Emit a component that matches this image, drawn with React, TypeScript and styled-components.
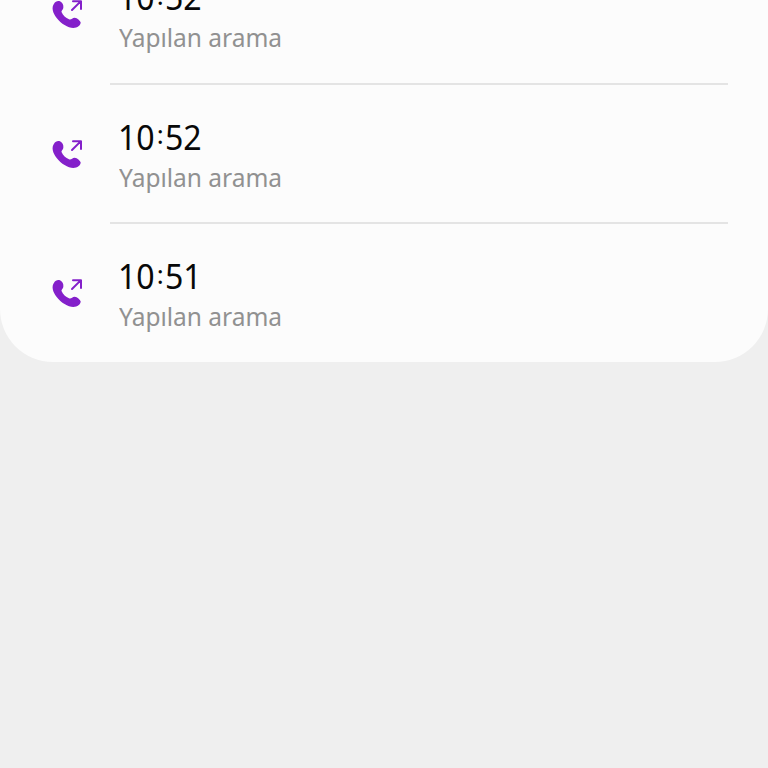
import React from "react";
import styled, { createGlobalStyle } from "styled-components";

const GlobalStyle = createGlobalStyle`
  body { margin: 0; background: #efefef; }
`;

const Screen = styled.main`
  height: 768px;
  overflow: hidden;
  background: #efefef;
  font-family: "Noto Sans", sans-serif;
`;

const CallList = styled.section`
  display: flex;
  flex-direction: column;
  justify-content: flex-end;
  box-sizing: border-box;
  height: 361.5px;
  overflow: hidden;
  background: #fcfcfc;
  border-radius: 0 0 53px 53px;
`;

const CallRow = styled.article`
  display: flex;
  flex: none;
  height: 137.3px;
  padding: 0 40px;
`;

const IconSlot = styled.div`
  flex: none;
  width: 70px;
  padding-top: 44.6px;
`;

const CallIcon = styled.svg`
  display: block;
  width: 60px;
  height: 50px;
`;

const Details = styled.div`
  padding: 28.8px 0 0 9px;
`;

const Time = styled.div`
  display: flex;
  height: 45px;
  line-height: 46px;
  font-size: 34.5px;
  color: #080808;
`;

const Digits = styled.span`
  width: 37px;
  margin-left: -1px;
  transform: scaleX(0.93);
  transform-origin: left;
`;

const Colon = styled.span`
  width: 10.5px;
  margin-top: -2.5px;
  font-size: 26px;
  text-align: center;
`;

const Label = styled.div`
  width: max-content;
  height: 36px;
  line-height: 36px;
  font-size: 26px;
  color: #919191;
  white-space: nowrap;
  transform: scaleX(0.942);
  transform-origin: left;
`;

const Divider = styled.hr`
  flex: none;
  width: 618px;
  height: 2px;
  margin: 0 40px 0 110px;
  border: 0;
  background: #e4e4e4;
`;

const calls = [
  { id: 1, hours: "10", minutes: "52" },
  { id: 2, hours: "10", minutes: "52" },
  { id: 3, hours: "10", minutes: "51" },
];

function OutgoingCallIcon() {
  return (
    <CallIcon viewBox="0 0 180 150" aria-hidden="true">
      <path
        fill="#8420ca"
        d="M42 41C46 34 54 31 60 34C68 38 71 46 70 53C69 60 63 61 65 67C69 76 77 84 87 88C94 91 96 83 104 83C112 84 120 91 122 97C122 107 112 114 100 114C84 114 63 101 50 84C38 68 34 52 42 41Z"
      />
      <path
        fill="none"
        stroke="#8420ca"
        strokeWidth="6"
        strokeLinecap="round"
        strokeLinejoin="round"
        d="M96 60L122 34M99 33.5H123V57"
      />
    </CallIcon>
  );
}

export default function App() {
  return (
    <Screen>
      <GlobalStyle />
      <CallList>
        {calls.map((call, index) => (
          <React.Fragment key={call.id}>
            {index > 0 && <Divider />}
            <CallRow>
              <IconSlot><OutgoingCallIcon /></IconSlot>
              <Details>
                <Time>
                  <Digits>{call.hours}</Digits>
                  <Colon>:</Colon>
                  <Digits>{call.minutes}</Digits>
                </Time>
                <Label>Yapılan arama</Label>
              </Details>
            </CallRow>
          </React.Fragment>
        ))}
      </CallList>
    </Screen>
  );
}
